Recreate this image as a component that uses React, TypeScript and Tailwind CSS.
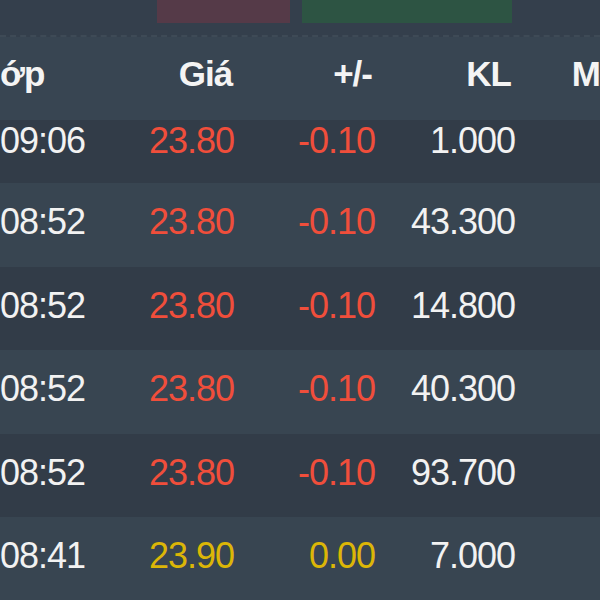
const rows = [
  { time: '09:06', price: '23.80', change: '-0.10', vol: '1.000', tone: 'down', h: 'h-[63px]' },
  { time: '08:52', price: '23.80', change: '-0.10', vol: '43.300', tone: 'down', h: 'h-[84px]' },
  { time: '08:52', price: '23.80', change: '-0.10', vol: '14.800', tone: 'down', h: 'h-[83px]' },
  { time: '08:52', price: '23.80', change: '-0.10', vol: '40.300', tone: 'down', h: 'h-[84px]' },
  { time: '08:52', price: '23.80', change: '-0.10', vol: '93.700', tone: 'down', h: 'h-[83px]' },
  { time: '08:41', price: '23.90', change: '0.00', vol: '7.000', tone: 'ref', h: 'h-[84px]' },
]

export default function App() {
  return (
    <div className="w-[600px] h-[600px] overflow-hidden bg-[#343f4c] font-['Liberation_Sans',Arial,sans-serif]">
      {/* buy / sell ratio bar */}
      <div className="h-[35px] flex items-start">
        <div className="ml-[157px] w-[133px] h-[23px] bg-[#553a48]" />
        <div className="ml-[12px] w-[210px] h-[23px] bg-[#2d5443]" />
      </div>
      <div className="border-t-2 border-dashed border-[#3e4a56]" />

      <div className="h-[83px] bg-[#384552] flex items-center text-[35px] font-bold text-[#f4f4f4] tracking-[-1px] pb-[8px]">
        <div className="w-[88px]">ớp</div>
        <div className="w-[146px] text-right">Giá</div>
        <div className="w-[141px] text-right">+/-</div>
        <div className="w-[140px] text-right">KL</div>
        <div className="pl-[61px]">M</div>
      </div>

      {rows.map((r, i) => {
        const color = r.tone === 'down' ? 'text-[#f04e3b]' : 'text-[#dcb607]'
        return (
          <div
            key={i}
            className={`${r.h} flex items-center text-[36px] tracking-[-1px] ${
              i % 2 === 0 ? 'bg-[#323c48]' : 'bg-[#384551]'
            } ${i === 0 ? 'pb-[22px]' : 'pb-[6px]'}`}
          >
            <div className="w-[88px] text-[#f2f2f2]">{r.time}</div>
            <div className={`w-[146px] text-right ${color}`}>{r.price}</div>
            <div className={`w-[141px] text-right ${color}`}>{r.change}</div>
            <div className="w-[140px] text-right text-[#f2f2f2]">{r.vol}</div>
          </div>
        )
      })}
    </div>
  )
}
